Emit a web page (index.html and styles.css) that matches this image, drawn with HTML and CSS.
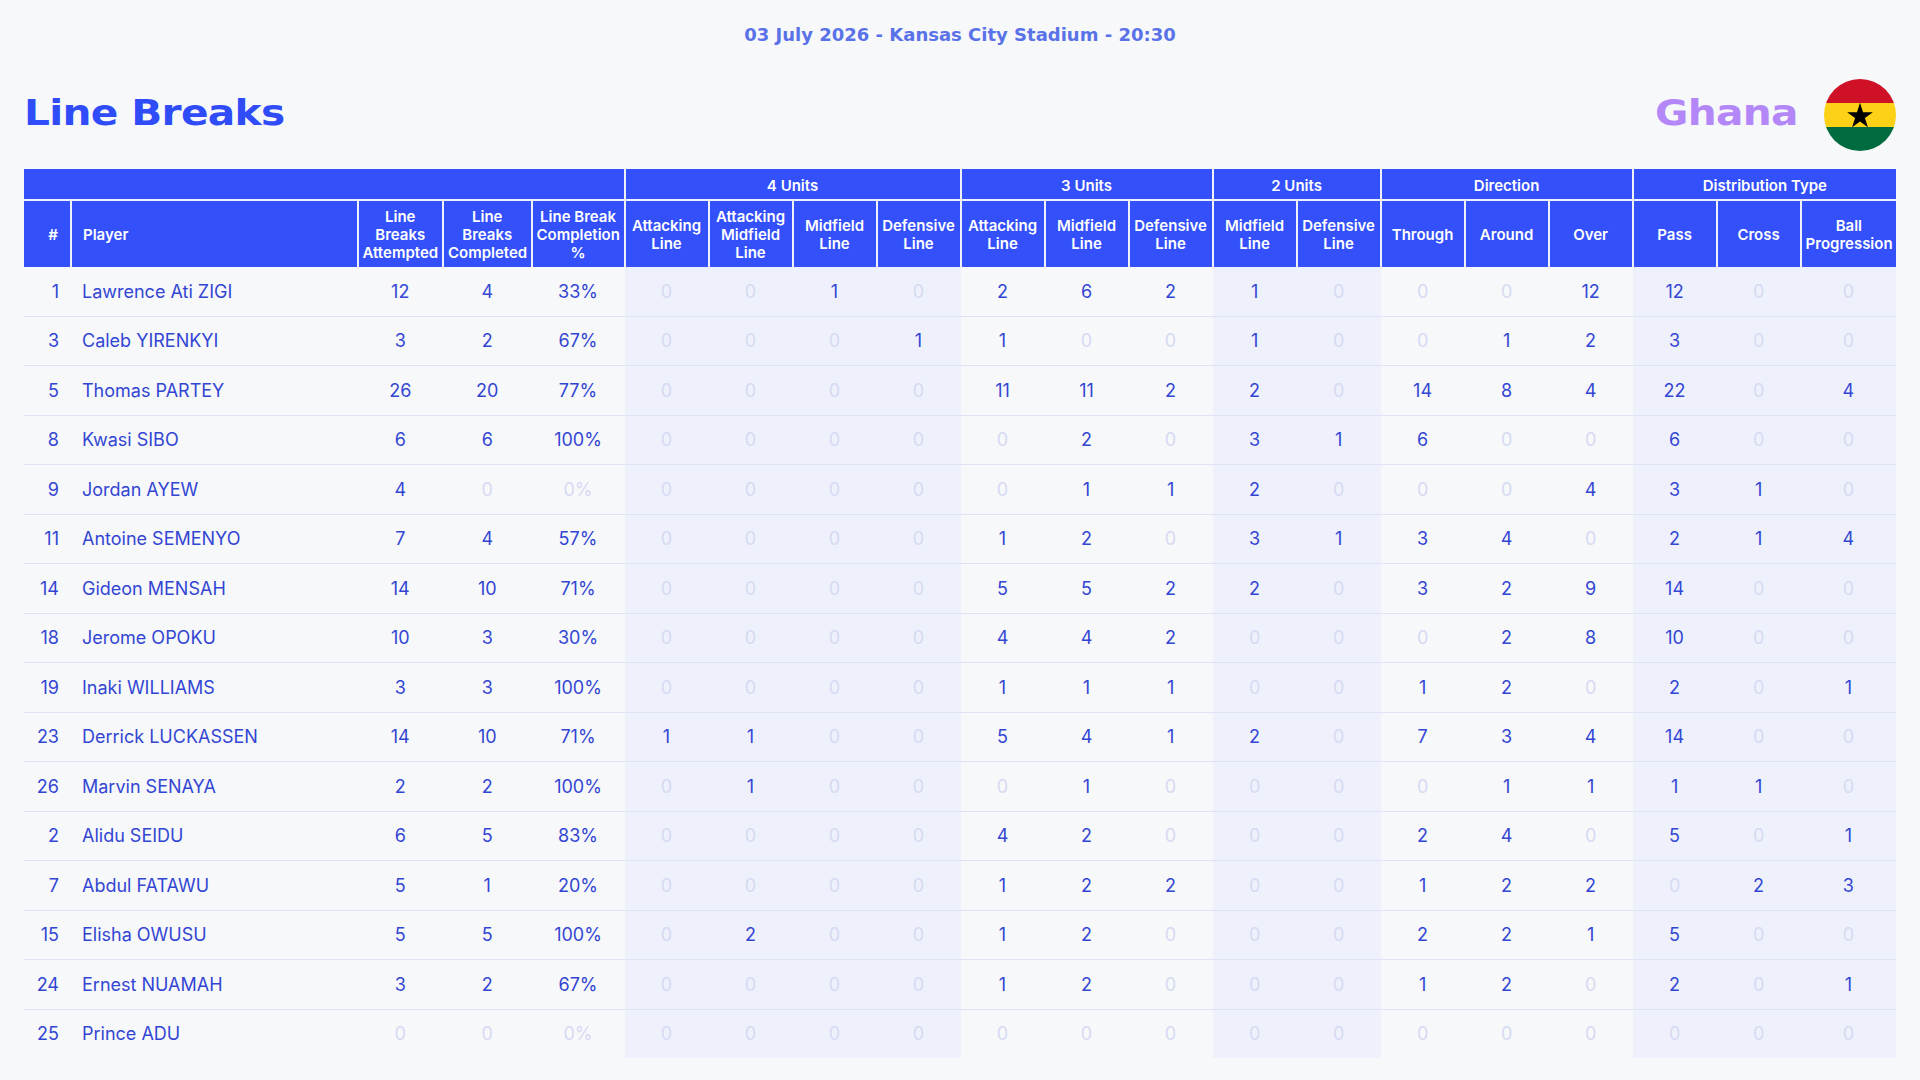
FILE: index.html
```html
<!DOCTYPE html>
<html lang="en">
<head>
<meta charset="utf-8">
<title>Line Breaks - Ghana</title>
<link rel="stylesheet" href="styles.css">
</head>
<body>
<div class="page">
  <div class="match-info">03 July 2026 - Kansas City Stadium - 20:30</div>
  <div class="title-row">
    <h1 class="title"><span class="wide">Line Breaks</span></h1>
    <div class="team">
      <span class="team-name"><span class="wide">Ghana</span></span>
      <svg class="flag" viewBox="0 0 72 72" width="72" height="72">
        <defs><clipPath id="fc"><circle cx="36" cy="36" r="36"/></clipPath></defs>
        <g clip-path="url(#fc)">
          <rect x="0" y="0" width="72" height="24" fill="#ce1126"/>
          <rect x="0" y="24" width="72" height="24" fill="#fcd116"/>
          <rect x="0" y="48" width="72" height="24" fill="#006b3f"/>
          <polygon fill="#000" points="36,23.8 39.03,33.13 48.84,33.13 40.91,38.89 43.94,48.22 36,42.46 28.06,48.22 31.09,38.89 23.16,33.13 32.97,33.13"/>
        </g>
      </svg>
    </div>
  </div>

  <table class="stats">
    <colgroup>
      <col class="c-num"><col class="c-player"><col class="c-att"><col class="c-cmp"><col class="c-pct">
      <col class="c-std shade"><col class="c-std shade"><col class="c-std shade"><col class="c-std shade">
      <col class="c-std"><col class="c-std"><col class="c-std">
      <col class="c-std shade"><col class="c-std shade">
      <col class="c-std"><col class="c-std"><col class="c-std">
      <col class="c-std shade"><col class="c-std shade"><col class="c-wide shade">
    </colgroup>
    <thead>
      <tr class="groups">
        <th colspan="5"></th>
        <th colspan="4">4 Units</th>
        <th colspan="3">3 Units</th>
        <th colspan="2">2 Units</th>
        <th colspan="3">Direction</th>
        <th colspan="3">Distribution Type</th>
      </tr>
      <tr class="cols">
        <th class="h-num">#</th>
        <th class="h-player">Player</th>
        <th>Line Breaks Attempted</th>
        <th>Line Breaks Completed</th>
        <th>Line Break Completion %</th>
        <th>Attacking Line</th>
        <th>Attacking Midfield Line</th>
        <th>Midfield Line</th>
        <th>Defensive Line</th>
        <th>Attacking Line</th>
        <th>Midfield Line</th>
        <th>Defensive Line</th>
        <th>Midfield Line</th>
        <th>Defensive Line</th>
        <th>Through</th>
        <th>Around</th>
        <th>Over</th>
        <th>Pass</th>
        <th>Cross</th>
        <th>Ball Progression</th>
      </tr>
    </thead>
    <tbody id="rows"></tbody>
  </table>
</div>
<script src="app.js"></script>
</body>
</html>
```

FILE: app.js
```js
var data = [
  [1, "Lawrence Ati ZIGI", 12, 4, 33, [0,0,1,0, 2,6,2, 1,0, 0,0,12, 12,0,0]],
  [3, "Caleb YIRENKYI", 3, 2, 67, [0,0,0,1, 1,0,0, 1,0, 0,1,2, 3,0,0]],
  [5, "Thomas PARTEY", 26, 20, 77, [0,0,0,0, 11,11,2, 2,0, 14,8,4, 22,0,4]],
  [8, "Kwasi SIBO", 6, 6, 100, [0,0,0,0, 0,2,0, 3,1, 6,0,0, 6,0,0]],
  [9, "Jordan AYEW", 4, 0, 0, [0,0,0,0, 0,1,1, 2,0, 0,0,4, 3,1,0]],
  [11, "Antoine SEMENYO", 7, 4, 57, [0,0,0,0, 1,2,0, 3,1, 3,4,0, 2,1,4]],
  [14, "Gideon MENSAH", 14, 10, 71, [0,0,0,0, 5,5,2, 2,0, 3,2,9, 14,0,0]],
  [18, "Jerome OPOKU", 10, 3, 30, [0,0,0,0, 4,4,2, 0,0, 0,2,8, 10,0,0]],
  [19, "Inaki WILLIAMS", 3, 3, 100, [0,0,0,0, 1,1,1, 0,0, 1,2,0, 2,0,1]],
  [23, "Derrick LUCKASSEN", 14, 10, 71, [1,1,0,0, 5,4,1, 2,0, 7,3,4, 14,0,0]],
  [26, "Marvin SENAYA", 2, 2, 100, [0,1,0,0, 0,1,0, 0,0, 0,1,1, 1,1,0]],
  [2, "Alidu SEIDU", 6, 5, 83, [0,0,0,0, 4,2,0, 0,0, 2,4,0, 5,0,1]],
  [7, "Abdul FATAWU", 5, 1, 20, [0,0,0,0, 1,2,2, 0,0, 1,2,2, 0,2,3]],
  [15, "Elisha OWUSU", 5, 5, 100, [0,2,0,0, 1,2,0, 0,0, 2,2,1, 5,0,0]],
  [24, "Ernest NUAMAH", 3, 2, 67, [0,0,0,0, 1,2,0, 0,0, 1,2,0, 2,0,1]],
  [25, "Prince ADU", 0, 0, 0, [0,0,0,0, 0,0,0, 0,0, 0,0,0, 0,0,0]]
];

var tbody = document.getElementById("rows");
data.forEach(function (r) {
  var tr = document.createElement("tr");
  function cell(text, cls, zero) {
    var td = document.createElement("td");
    td.textContent = text;
    var c = cls || "";
    if (zero) c += " zero";
    if (c) td.className = c.trim();
    tr.appendChild(td);
  }
  cell(r[0], "num");
  cell(r[1], "player");
  cell(r[2], "", r[2] === 0);
  cell(r[3], "", r[3] === 0);
  cell(r[4] + "%", "", r[4] === 0);
  r[5].forEach(function (v) { cell(v, "", v === 0); });
  tbody.appendChild(tr);
});
```

FILE: styles.css
```css
html, body {
  margin: 0;
  padding: 0;
  background: #f7f8fa;
}

.page {
  width: 1872px;
  padding: 0 24px;
  font-family: Inter, "Noto Sans", sans-serif;
}

.match-info {
  padding-top: 24px;
  height: 22px;
  line-height: 22px;
  text-align: center;
  font-family: "DejaVu Sans", sans-serif;
  font-weight: 700;
  font-size: 18px;
  color: #5a72e8;
  letter-spacing: 0;
}

.title-row {
  display: flex;
  align-items: center;
  justify-content: space-between;
  height: 74px;
  margin-top: 32px;
}

.wide {
  display: inline-block;
  transform: scaleX(1.13);
  transform-origin: left center;
}

.title {
  margin: 0 0 4px 0;
  font-family: "DejaVu Sans", sans-serif;
  font-weight: 700;
  font-size: 36px;
  line-height: 40px;
  color: #2f4cf8;
  letter-spacing: -0.6px;
}

.team {
  display: flex;
  align-items: center;
  gap: 26px;
}

.team-name {
  font-family: "DejaVu Sans", sans-serif;
  font-weight: 700;
  font-size: 36px;
  line-height: 40px;
  color: #b387f7;
  letter-spacing: -0.6px;
  width: 143px;
  margin-bottom: 4px;
}

.flag {
  display: block;
}

.stats {
  margin-top: 17px;
  width: 1872px;
  table-layout: fixed;
  border-collapse: collapse;
}

.c-num { width: 47px; }
.c-player { width: 286.5px; }
.c-att { width: 85.5px; }
.c-cmp { width: 88.5px; }
.c-pct { width: 93px; }
.c-std { width: 84px; }
.c-wide { width: 95.5px; }

.shade { background: #eef1fc; }

.stats th {
  background: #3350fb;
  color: #ffffff;
  font-weight: 600;
  font-size: 15px;
  line-height: 18px;
  padding: 0 4px;
  text-align: center;
  border-left: 2px solid #eef0fb;
}

.stats th:first-child {
  border-left: none;
}

.groups th {
  height: 27px;
  padding-top: 3px;
  border-bottom: 2px solid #eef0fb;
}

.cols th {
  height: 65px;
  padding-top: 1px;
}

.cols .h-num {
  text-align: right;
  padding-right: 12px;
}

.cols .h-player {
  text-align: left;
  padding-left: 11px;
}

.stats td {
  height: 48.5px;
  padding: 0;
  text-align: center;
  font-size: 18px;
  font-weight: 400;
  color: #3346d3;
  border-bottom: 1px solid #dfe3f6;
}

.stats tbody tr:last-child td {
  border-bottom: none;
}

.stats td.num {
  text-align: right;
  padding-right: 12px;
}

.stats td.player {
  text-align: left;
  padding-left: 11px;
}

.stats td.zero {
  color: #d6daf2;
}
```
